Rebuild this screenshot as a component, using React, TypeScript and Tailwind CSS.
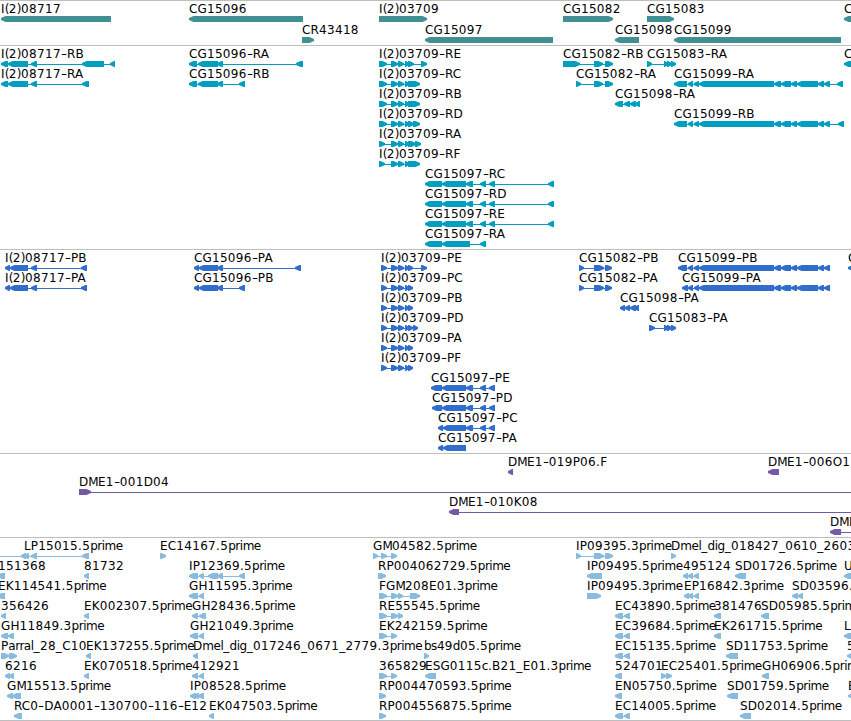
import React from "react";

type Strand = "<" | ">";
type Feature = {
  label: string;
  x: number;
  strand: Strand;
  blocks: number[][];
  /** extent of the connecting line when it runs past the blocks */
  line?: number[];
};
type Track = { name: string; color: string; height: string; rowHeight: string; rows: Feature[][] };

const f = (label: string, strand: Strand, blocks: number[][], x = blocks[0][0], line?: number[]): Feature => ({
  label,
  x,
  strand,
  blocks,
  line,
});

const head08717 = [[1, 8], [8, 28], [31, 37]];
const head15096 = [[189, 197], [198, 218], [217, 223]];
const head03709 = [[379, 387], [391, 398], [398, 404], [405, 409]];
const short03709 = [[379, 385], [391, 398], [398, 404], [405, 409]];
const long15097 = [[425, 442], [442, 466], [466, 473], [480, 486], [489, 495], [548, 554]];
const mid15099 = [[688, 693], [694, 699], [699, 774], [774, 781], [781, 791], [791, 797], [797, 818], [818, 824], [824, 830]];
const prot03709 = [[381, 387], [391, 398], [398, 404], [405, 409], [408, 413]];
const ec = [[615, 623], [624, 630]];

const tracks: Track[] = [
  {
    name: "genes",
    color: "#408f92",
    height: "h-[45px]",
    rowHeight: "h-[21px]",
    rows: [
      [
        f("I(2)08717", "<", [[1, 111]]),
        f("CG15096", "<", [[189, 303]]),
        f("I(2)03709", ">", [[379, 427]]),
        f("CG15082", ">", [[563, 613]]),
        f("CG15083", ">", [[647, 674]]),
        f("C", "<", [[844, 870]]),
      ],
      [
        f("CR43418", ">", [[302, 314]]),
        f("CG15097", "<", [[425, 553]]),
        f("CG15098", "<", [[615, 639]]),
        f("CG15099", "<", [[674, 841]]),
      ],
    ],
  },
  {
    name: "transcripts",
    color: "#009fbf",
    height: "h-[204px]",
    rowHeight: "h-[20px]",
    rows: [
      [
        f("I(2)08717-RB", "<", [...head08717, [82, 104], [110, 115]]),
        f("CG15096-RA", "<", [...head15096, [296, 303]]),
        f("I(2)03709-RE", ">", [...head03709, [408, 414], [421, 427]]),
        f("CG15082-RB", ">", [[563, 580], [594, 603], [605, 613]]),
        f("CG15083-RA", ">", [[647, 652], [664, 668], [667, 672], [671, 676]]),
        f("C", "<", [[844, 870]]),
      ],
      [
        f("I(2)08717-RA", "<", [...head08717, [82, 89]]),
        f("CG15096-RB", "<", [...head15096, [239, 245]]),
        f("I(2)03709-RC", ">", [...head03709, [408, 420]]),
        f("CG15082-RA", ">", [[576, 581], [594, 603], [605, 613]]),
        f("CG15099-RA", "<", [[674, 687], ...mid15099, [837, 843]]),
      ],
      [
        f("I(2)03709-RB", ">", [...head03709, [408, 420]]),
        f("CG15098-RA", "<", [[615, 623], [624, 630], [630, 636], [635, 640]]),
      ],
      [
        f("I(2)03709-RD", ">", [...head03709, [408, 414], [413, 420]]),
        f("CG15099-RB", "<", [[674, 687], ...mid15099, [838, 844]]),
      ],
      [f("I(2)03709-RA", ">", [...short03709, [408, 416], [415, 421]])],
      [f("I(2)03709-RF", ">", [...short03709, [408, 420]])],
      [f("CG15097-RC", "<", long15097)],
      [f("CG15097-RD", "<", long15097)],
      [f("CG15097-RE", "<", long15097)],
      [f("CG15097-RA", "<", [[425, 442], [442, 470], [480, 486]])],
    ],
  },
  {
    name: "proteins",
    color: "#316dcc",
    height: "h-[204px]",
    rowHeight: "h-[20px]",
    rows: [
      [
        f("I(2)08717-PB", "<", [[5, 10], [10, 28], [31, 37], [81, 87]]),
        f("CG15096-PA", "<", [[194, 199], [199, 218], [217, 223], [295, 301]]),
        f("I(2)03709-PE", ">", [...prot03709, [421, 427]]),
        f("CG15082-PB", ">", [[579, 584], [594, 604], [605, 612]]),
        f("CG15099-PB", "<", [[678, 687], ...mid15099]),
        f("C", "<", [[848, 870]]),
      ],
      [
        f("I(2)08717-PA", "<", [[5, 10], [10, 28], [31, 37], [81, 87]]),
        f("CG15096-PB", "<", [[194, 199], [199, 218], [217, 223], [239, 245]]),
        f("I(2)03709-PC", ">", prot03709),
        f("CG15082-PA", ">", [[579, 584], [594, 604], [605, 612]]),
        f("CG15099-PA", "<", [[682, 688], ...mid15099]),
      ],
      [f("I(2)03709-PB", ">", prot03709), f("CG15098-PA", "<", [[620, 625], [625, 630], [630, 636], [634, 639]])],
      [
        f("I(2)03709-PD", ">", [...prot03709, [413, 418]]),
        f("CG15083-PA", ">", [[649, 655], [664, 669], [667, 672], [671, 676]]),
      ],
      [f("I(2)03709-PA", ">", prot03709)],
      [f("I(2)03709-PF", ">", prot03709)],
      [f("CG15097-PE", "<", [[431, 442], [442, 466], [466, 473], [480, 486], [489, 495]])],
      [f("CG15097-PD", "<", [[432, 442], [442, 466], [466, 473], [480, 486], [489, 495]])],
      [f("CG15097-PC", "<", [[438, 443], [443, 466], [466, 473], [480, 486], [489, 495]])],
      [f("CG15097-PA", "<", [[438, 443], [443, 466]])],
    ],
  },
  {
    name: "clones",
    color: "#7459a6",
    height: "h-[84px]",
    rowHeight: "h-[20px]",
    rows: [
      [f("DME1-019P06.F", "<", [[508, 513]]), f("DME1-006O1", "<", [[768, 779]])],
      [f("DME1-001D04", ">", [[79, 91]], 79, [79, 851])],
      [f("DME1-010K08", "<", [[449, 459]], 449, [449, 851])],
      [f("DME", "<", [[830, 841]], 830, [830, 851])],
    ],
  },
  {
    name: "ests",
    color: "#88bbdd",
    height: "h-[183px]",
    rowHeight: "h-[20px]",
    rows: [
      [
        f("LP15015.5prime", "<", [[21, 26], [24, 29], [31, 37], [82, 89]], 24, [0, 89]),
        f("EC14167.5prime", ">", [[160, 166]]),
        f("GM04582.5prime", ">", [[373, 378], [381, 387], [391, 397]]),
        f("IP09395.3prime", ">", [[576, 581], [594, 604], [605, 613]]),
        f("Dmel_dig_018427_0610_2603", ">", [[671, 676]]),
      ],
      [
        f("151368", "<", [[-3, 5]], -2),
        f("81732", "<", [[84, 89]]),
        f("IP12369.5prime", "<", [[189, 198], [199, 204], [208, 218], [217, 223], [239, 245]]),
        f("RP004062729.5prime", ">", [[378, 382], [380, 386]]),
        f("IP09495.5prime", "<", [[587, 602]]),
        f("495124", "<", [[683, 688], [688, 693], [694, 699]]),
        f("SD01726.5prime", "<", [[735, 746]]),
        f("U", "<", [[844, 870]]),
      ],
      [
        f("EK114541.5prime", "<", [[-3, 5]], -2),
        f("GH11595.3prime", "<", [[189, 198], [199, 204]]),
        f("FGM208E01.3prime", ">", [[379, 387], [391, 398], [398, 403], [410, 420]]),
        f("IP09495.3prime", ">", [[587, 601]]),
        f("EP16842.3prime", "<", [[684, 689], [688, 693], [694, 699]]),
        f("SD03596.", "<", [[792, 798], [798, 803]]),
      ],
      [
        f("356426", "<", [[1, 6]]),
        f("EK002307.5prime", "<", [[84, 89]]),
        f("GH28436.5prime", "<", [[192, 198], [199, 206]]),
        f("RE55545.5prime", ">", [[379, 387], [391, 398], [398, 403]]),
        f("EC43890.5prime", "<", ec),
        f("381476", "<", [[714, 721]]),
        f("SD05985.5prime", "<", [[761, 769]]),
      ],
      [
        f("GH11849.3prime", "<", [[1, 8], [8, 14]]),
        f("GH21049.3prime", "<", [[190, 198], [199, 204]]),
        f("EK242159.5prime", ">", [[379, 387], [391, 397]]),
        f("EC39684.5prime", "<", ec),
        f("EK261715.5prime", "<", [[714, 721]]),
        f("L", "<", [[844, 870]]),
      ],
      [
        f("Parral_28_C10", ">", [[1, 9], [9, 17]]),
        f("EK137255.5prime", "<", [[86, 91]]),
        f("Dmel_dig_017246_0671_2779.3prime", "<", [[193, 198]]),
        f("bs49d05.5prime", ">", [[424, 429]]),
        f("EC15135.5prime", "<", ec),
        f("SD11753.5prime", "<", [[726, 738]]),
        f("5", "<", [[847, 870]]),
      ],
      [
        f("6216", "<", [[5, 10], [9, 14]]),
        f("EK070518.5prime", "<", [[84, 89]]),
        f("412921", "<", [[192, 198], [199, 204]]),
        f("365829", ">", [[379, 387], [391, 397]]),
        f("ESG0115c.B21_E01.3prime", "<", [[425, 436]]),
        f("524701", "<", [[615, 622]]),
        f("EC25401.5prime", ">", [[661, 666], [666, 672]]),
        f("GH06906.5prime", "<", [[762, 769]]),
      ],
      [
        f("GM15513.5prime", "<", [[7, 13], [12, 21]]),
        f("IP08528.5prime", "<", [[190, 196], [194, 199], [198, 204]]),
        f("RP004470593.5prime", ">", [[379, 386]]),
        f("EN05750.5prime", "<", [[615, 622]]),
        f("SD01759.5prime", "<", [[727, 738]]),
        f("E", "<", [[848, 870]]),
      ],
      [
        f("RC0-DA0001-130700-116-E12", "<", [[14, 22]]),
        f("EK047503.5prime", "<", [[209, 214]]),
        f("RP004556875.5prime", ">", [[379, 386]]),
        f("EC14005.5prime", "<", ec),
        f("SD02014.5prime", "<", [[740, 751]]),
      ],
    ],
  },
];

/** Block with a blunt arrow head pointing along the strand. */
function blockPath([a, b]: number[], strand: Strand) {
  const h = Math.min(4.5, b - a - 1);
  return strand === "<"
    ? `M${a} 2L${a + h} 0H${b}V6H${a + h}L${a} 4Z`
    : `M${b} 2L${b - h} 0H${a}V6H${b - h}L${b} 4Z`;
}

function Label({ text }: { text: string }) {
  return (
    <>
      {text.split(/(-|[a-z]+|M|[A-LN-Z]+|[()])/).map((run, i) => {
        if (run === "-") return <span key={i} className="inline-block w-[6px] origin-left scale-x-140">-</span>;
        if (run === "M") return <span key={i} className="tracking-[-0.7px]">{run}</span>;
        if (/^[()]$/.test(run)) return <span key={i} className="tracking-[-0.5px]">{run}</span>;
        if (/^[a-z]+$/.test(run)) return <span key={i} className="tracking-[-0.5px]">{run}</span>;
        if (/^[A-Z]+$/.test(run)) return <span key={i} className="tracking-[0.1px]">{run}</span>;
        return run;
      })}
    </>
  );
}

function Row({ features, color, height }: { features: Feature[]; color: string; height: string }) {
  return (
    <div className={`relative w-full shrink-0 ${height}`}>
      {features.map((ft) => (
        <span
          key={ft.label + ft.x}
          className="absolute top-px whitespace-pre text-[12px] leading-[15px] tracking-[0.35px] text-black"
          style={{ left: ft.x }}
        >
          <Label text={ft.label} />
        </span>
      ))}
      <svg className="absolute left-0 top-[15px] h-[6px] w-[851px]" viewBox="0 0 851 6">
        {features.map((ft) => {
          const [from, to] = ft.line ?? [ft.blocks[0][0], ft.blocks[ft.blocks.length - 1][1]];
          return (
            <g key={ft.label + ft.x} fill={color}>
              <rect x={from} y={3} width={to - from} height={1} />
              {ft.blocks.map((b, i) => (
                <path key={i} d={blockPath(b, ft.strand)} />
              ))}
            </g>
          );
        })}
      </svg>
    </div>
  );
}

export default function App() {
  return (
    <main className="flex h-[721px] w-[851px] flex-col overflow-hidden bg-white font-['DejaVu_Sans',sans-serif]">
      {tracks.map((t) => (
        <section key={t.name} className={`flex shrink-0 flex-col border-t border-[#bebebe] ${t.height}`}>
          {t.rows.map((r, i) => (
            <Row key={i} features={r} color={t.color} height={t.rowHeight} />
          ))}
        </section>
      ))}
      <div className="h-px shrink-0 bg-[#bebebe]" />
    </main>
  );
}
